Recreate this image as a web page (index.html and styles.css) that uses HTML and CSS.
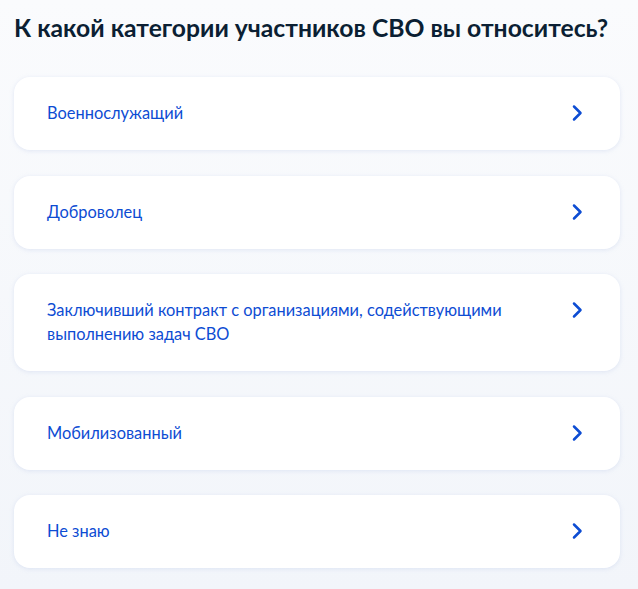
FILE: index.html
```html
<!DOCTYPE html>
<html lang="ru">
<head>
    <meta charset="UTF-8">
    <meta name="viewport" content="width=device-width, initial-scale=1.0">
    <title>Категория участника СВО</title>
    <link rel="stylesheet" href="styles.css">
</head>
<body>
    <div class="page">
        <h1>К какой категории участников СВО вы относитесь?</h1>
        <div class="options">
            <a class="option" href="#">
                <span class="option-text">Военнослужащий</span>
                <svg class="chevron" viewBox="0 0 24 24"><path d="M10 5.5l6.5 6.5-6.5 6.5"/></svg>
            </a>
            <a class="option" href="#">
                <span class="option-text">Доброволец</span>
                <svg class="chevron" viewBox="0 0 24 24"><path d="M10 5.5l6.5 6.5-6.5 6.5"/></svg>
            </a>
            <a class="option" href="#">
                <span class="option-text">Заключивший контракт с организациями, содействующими выполнению задач СВО</span>
                <svg class="chevron" viewBox="0 0 24 24"><path d="M10 5.5l6.5 6.5-6.5 6.5"/></svg>
            </a>
            <a class="option" href="#">
                <span class="option-text">Мобилизованный</span>
                <svg class="chevron" viewBox="0 0 24 24"><path d="M10 5.5l6.5 6.5-6.5 6.5"/></svg>
            </a>
            <a class="option" href="#">
                <span class="option-text">Не знаю</span>
                <svg class="chevron" viewBox="0 0 24 24"><path d="M10 5.5l6.5 6.5-6.5 6.5"/></svg>
            </a>
        </div>
    </div>
</body>
</html>
```

FILE: styles.css
```css
body {
    margin: 0;
    padding: 0;
    font-family: Lato, 'Noto Sans', sans-serif;
    background: linear-gradient(#fafbfd, #f2f5fa);
    min-height: 100vh;
    color: #0b1f33;
}
.page {
    padding: 0 18px 0 14px;
}
h1 {
    margin: 0;
    padding-top: 12px;
    font-size: 24.7px;
    line-height: 32px;
    font-weight: 700;
    color: #0b1f33;
}
.options {
    display: flex;
    flex-direction: column;
    gap: 25.5px;
    margin-top: 33px;
}
.option {
    display: flex;
    align-items: flex-start;
    justify-content: space-between;
    gap: 24px;
    padding: 24px 32px 25px 33px;
    background-color: #ffffff;
    border-radius: 16px;
    box-shadow: 0 1px 4px rgba(180, 196, 228, 0.35);
    text-decoration: none;
}
.option-text {
    font-size: 16.4px;
    line-height: 24px;
    color: #0d4cd3;
    max-width: 470px;
}
.chevron {
    width: 24px;
    height: 24px;
    flex-shrink: 0;
}
.chevron path {
    fill: none;
    stroke: #0d4cd3;
    stroke-width: 2.5;
    stroke-linecap: round;
    stroke-linejoin: round;
}
```
